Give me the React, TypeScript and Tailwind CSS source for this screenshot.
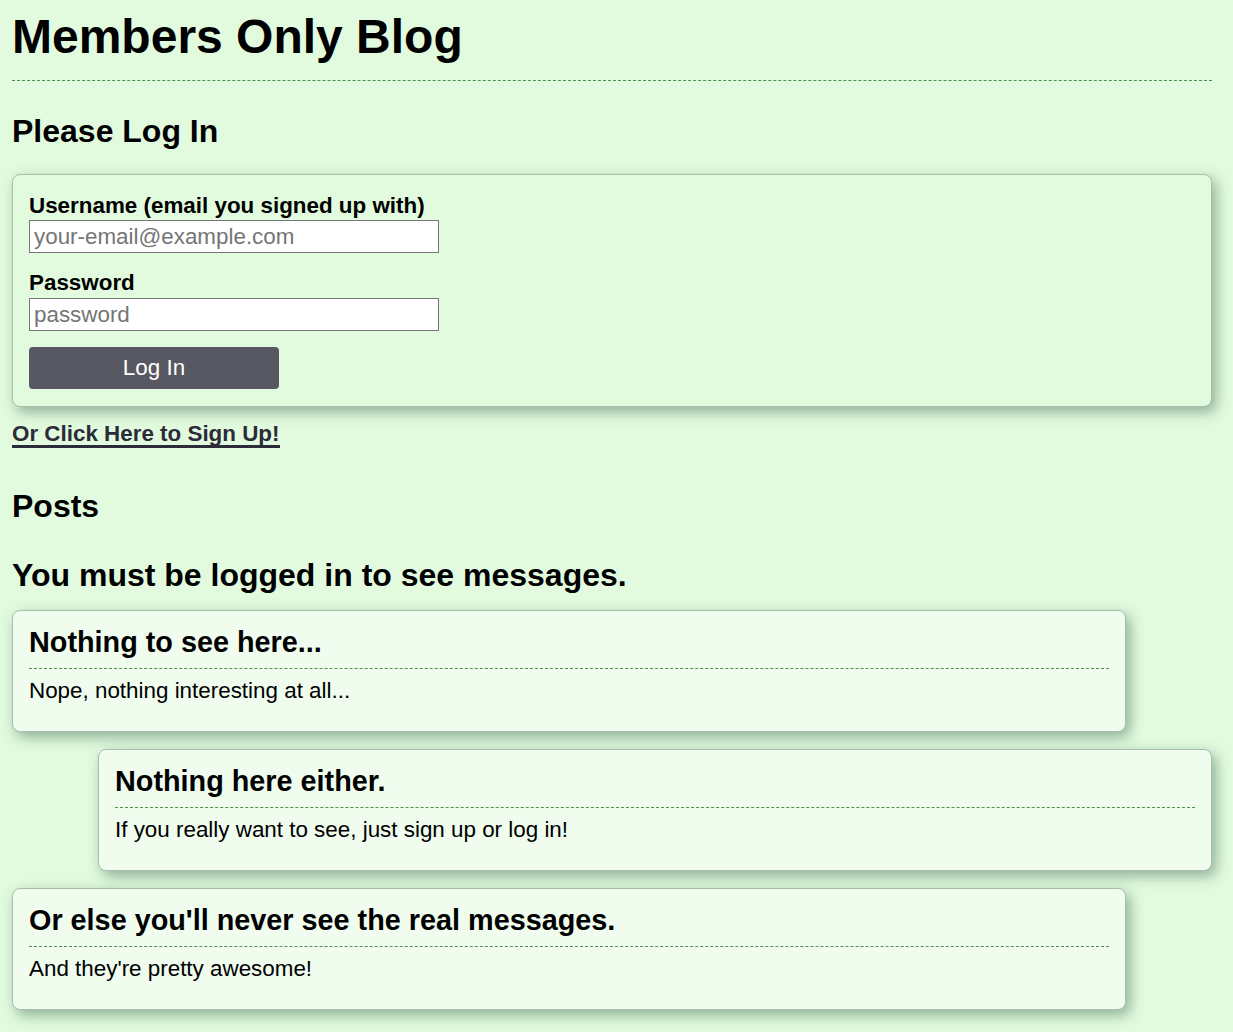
const posts = [
  { title: "Nothing to see here...", body: "Nope, nothing interesting at all...", right: false },
  { title: "Nothing here either.", body: "If you really want to see, just sign up or log in!", right: true },
  { title: "Or else you'll never see the real messages.", body: "And they're pretty awesome!", right: false },
]

const font = "font-['Liberation_Sans',Arial,sans-serif]"

export default function App() {
  return (
    <div className={`min-h-screen bg-[#e2fbdf] text-black px-3 text-[22.4px] ${font}`}>
      <div className="w-[1200px]">
        <h1 className="text-[48px] leading-[56px] font-bold pt-[9px] pb-[15px] border-b border-dashed border-[#4f8f4f]">
          Members Only Blog
        </h1>

        <h2 className="text-[32px] leading-[36px] font-bold mt-[32px] mb-[25px]">Please Log In</h2>

        <form className="rounded-lg border border-[#a8bfae] bg-[#e2fbdf] px-4 pt-[17px] pb-[17px] shadow-[4px_5px_14px_rgba(60,100,75,0.5)]">
          <label className="block leading-[28px] font-bold">Username (email you signed up with)</label>
          <input
            type="email"
            placeholder="your-email@example.com"
            className="block w-[410px] h-[33px] border border-[#767676] bg-white px-1 text-[22.4px] placeholder:text-[#757575] outline-none"
          />
          <label className="block leading-[28px] font-bold mt-4">Password</label>
          <input
            type="password"
            placeholder="password"
            className="block mt-px w-[410px] h-[33px] border border-[#767676] bg-white px-1 text-[22.4px] placeholder:text-[#757575] outline-none"
          />
          <button
            type="button"
            className="block mt-4 w-[250px] h-[42px] rounded bg-[#585862] text-white text-[22.4px]"
          >
            Log In
          </button>
        </form>

        <a href="#" className="inline-block mt-[15px] leading-[23px] font-bold text-[#2b2b3a] border-b-[3px] border-[#2b2b3a]">
          Or Click Here to Sign Up!
        </a>

        <h2 className="text-[32px] leading-[36px] font-bold mt-[37px]">Posts</h2>
        <h2 className="text-[32px] leading-[36px] font-bold mt-[33px] mb-[17px]">You must be logged in to see messages.</h2>

        <div className="flex flex-col gap-[17px] pb-6">
          {posts.map((p) => (
            <div
              key={p.title}
              className={`w-[1114px] rounded-lg border border-[#a8bfae] bg-[#effcee] px-4 pt-[15px] pb-[27px] shadow-[4px_5px_14px_rgba(60,100,75,0.5)] ${p.right ? "self-end" : ""}`}
            >
              <h3 className="text-[28.8px] leading-[33px] font-bold pb-[9px] border-b border-dashed border-[#4f8f4f]">
                {p.title}
              </h3>
              <p className="leading-[26px] mt-[9px]">{p.body}</p>
            </div>
          ))}
        </div>
      </div>
    </div>
  )
}
